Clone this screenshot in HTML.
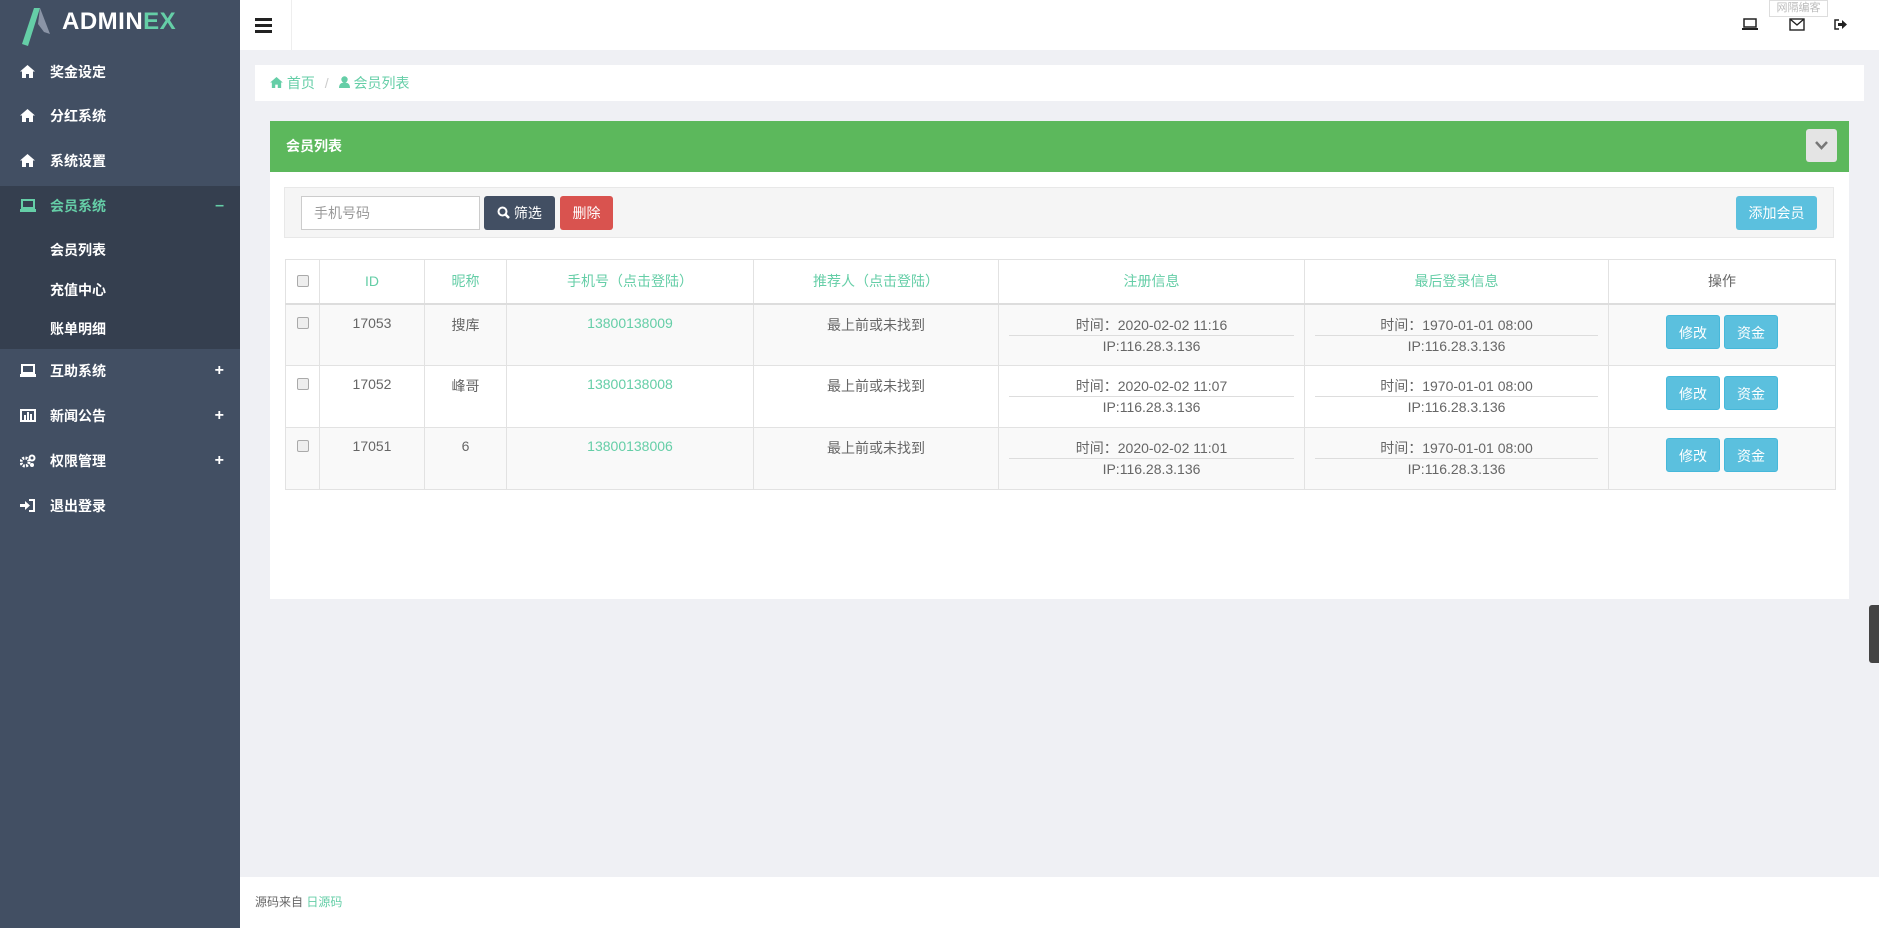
<!DOCTYPE html>
<html><head><meta charset="utf-8"><style>
*{box-sizing:border-box;margin:0;padding:0}
body{width:1879px;height:928px;position:relative;overflow:hidden;background:#eff0f4;font-family:"Liberation Sans","Noto Sans CJK SC",sans-serif;font-size:14px;color:#666}
.abs{position:absolute}
#side{left:0;top:0;width:240px;height:928px;background:#424f63}
.mi{position:absolute;left:0;width:240px;height:40px;line-height:40px;color:#fff;font-size:14px;padding-left:50px;font-weight:bold}
.mi svg{position:absolute;left:20px;top:13px}
.mi .pm{position:absolute;right:16px;top:0;font-size:16px}
.sub{position:absolute;left:50px;color:#fff;font-size:14px;font-weight:bold}
th,td{border:1px solid #e2e2e2;text-align:center;font-weight:normal}
table{border-collapse:collapse;position:absolute;left:285px;top:259px;width:1550px;table-layout:fixed;background:#fff}
th{height:44px;color:#65cea7;font-size:14px;border-bottom:2px solid #ddd}
td{height:62px;vertical-align:top;padding-top:10px;color:#666;font-size:14px}
tr.odd td{background:#f9f9f9}
.cb{display:inline-block;width:12px;height:12px;border:1px solid #aaa;border-radius:2px;background:#eee;margin-top:2px}
.inf{margin:0 10px;line-height:20px}
.inf div:first-child{border-bottom:1px solid #ddd}
.btn{position:absolute;color:#fff;font-size:14px;text-align:center;border-radius:3px}
.bi{display:inline-block;width:54px;height:34px;line-height:34px;background:#5bc0de;color:#fff;border-radius:3px;border:1px solid #46b8da;margin:0 2px}
</style></head><body>
<div id="side" class="abs">
 <svg class="abs" style="left:20px;top:4px" width="34" height="42" viewBox="0 0 34 42"><path d="M2 40 L14 4 L20 4 L8 42 Z" fill="#65cea7"/><path d="M20 4 L30 30 L24 28 L18 20 Z" fill="#8a94a6"/></svg>
 <div class="abs" style="left:62px;top:8px;font-size:24px;font-weight:bold;color:#fff;letter-spacing:0.5px">ADMIN<span style="color:#65cea7">EX</span></div>
 <div class="mi" style="top:52px"><svg width="15" height="13" viewBox="0 0 15 13"><path d="M7.5 0 L15 6.5 L13 6.5 L13 13 L9 13 L9 9 L6 9 L6 13 L2 13 L2 6.5 L0 6.5 Z" fill="#fff"/></svg>奖金设定</div>
 <div class="mi" style="top:96px"><svg width="15" height="13" viewBox="0 0 15 13"><path d="M7.5 0 L15 6.5 L13 6.5 L13 13 L9 13 L9 9 L6 9 L6 13 L2 13 L2 6.5 L0 6.5 Z" fill="#fff"/></svg>分红系统</div>
 <div class="mi" style="top:141px"><svg width="15" height="13" viewBox="0 0 15 13"><path d="M7.5 0 L15 6.5 L13 6.5 L13 13 L9 13 L9 9 L6 9 L6 13 L2 13 L2 6.5 L0 6.5 Z" fill="#fff"/></svg>系统设置</div>
 <div class="abs" style="left:0;top:186px;width:240px;height:163px;background:#353f4f"></div>
 <div class="mi" style="top:186px;color:#65cea7"><svg width="16" height="13"><rect x="2" y="1" width="12" height="8" fill="none" stroke="#65cea7" stroke-width="2"/><rect x="0" y="10" width="16" height="3" fill="#65cea7"/></svg>会员系统<span class="pm">&#8211;</span></div>
 <div class="sub" style="top:240px">会员列表</div>
 <div class="sub" style="top:280px">充值中心</div>
 <div class="sub" style="top:319px">账单明细</div>
 <div class="mi" style="top:351px"><svg width="16" height="13"><rect x="2" y="1" width="12" height="8" fill="none" stroke="#fff" stroke-width="2"/><rect x="0" y="10" width="16" height="3" fill="#fff"/></svg>互助系统<span class="pm">+</span></div>
 <div class="mi" style="top:396px"><svg width="16" height="13"><rect x="1" y="1" width="14" height="11" fill="none" stroke="#fff" stroke-width="2"/><rect x="4" y="6" width="2" height="5" fill="#fff"/><rect x="7" y="3" width="2" height="8" fill="#fff"/><rect x="10" y="5" width="2" height="6" fill="#fff"/></svg>新闻公告<span class="pm">+</span></div>
 <div class="mi" style="top:441px"><svg width="16" height="14"><circle cx="5" cy="8" r="4" fill="none" stroke="#fff" stroke-width="3" stroke-dasharray="2 1.2"/><circle cx="12" cy="4" r="2.5" fill="none" stroke="#fff" stroke-width="2"/><circle cx="12" cy="11" r="2" fill="#fff"/></svg>权限管理<span class="pm">+</span></div>
 <div class="mi" style="top:486px"><svg width="15" height="13"><path d="M9 1 H14 V12 H9" fill="none" stroke="#fff" stroke-width="2"/><path d="M0 5 H5 V2 L10 6.5 L5 11 V8 H0 Z" fill="#fff"/></svg>退出登录</div>
</div>
<div class="abs" style="left:240px;top:0;width:1639px;height:50px;background:#fff"></div>
<div class="abs" style="left:291px;top:0;width:1px;height:50px;background:#eee"></div>
<div class="abs" style="left:255px;top:18px;width:17px;height:3px;background:#222;box-shadow:0 6px 0 #222,0 12px 0 #222"></div>
<div class="abs" style="left:1769px;top:0;width:59px;height:17px;background:#fff;border:1px solid #ddd;font-size:11px;color:#bbb;text-align:center;line-height:14px">网隔编客</div>
<svg class="abs" style="left:1742px;top:18px" width="16" height="13"><rect x="2" y="1" width="12" height="8" fill="none" stroke="#222" stroke-width="1.5"/><rect x="0" y="10" width="16" height="2" fill="#222"/></svg>
<svg class="abs" style="left:1789px;top:18px" width="16" height="13"><rect x="1" y="1" width="14" height="11" fill="none" stroke="#222" stroke-width="1.4"/><path d="M1 1 L8 7 L15 1" fill="none" stroke="#222" stroke-width="1.4"/></svg>
<svg class="abs" style="left:1834px;top:18px" width="14" height="13"><path d="M5 2 H1 V11 H5" fill="none" stroke="#222" stroke-width="1.5"/><path d="M4 5 H8 V2 L13 6.5 L8 11 V8 H4 Z" fill="#222"/></svg>
<div class="abs" style="left:255px;top:65px;width:1609px;height:36px;background:#fff;line-height:36px;padding-left:15px;color:#65cea7;font-size:14px"><svg width="13" height="11" viewBox="0 0 15 13"><path d="M7.5 0 L15 6.5 L13 6.5 L13 13 L9 13 L9 9 L6 9 L6 13 L2 13 L2 6.5 L0 6.5 Z" fill="#65cea7"/></svg> 首页 <span style="color:#ccc;margin:0 6px">/</span> <svg width="11" height="12"><circle cx="5.5" cy="3.5" r="3.2" fill="#65cea7"/><path d="M0 12 Q0 6.5 5.5 6.5 Q11 6.5 11 12 Z" fill="#65cea7"/></svg> 会员列表</div>
<div class="abs" style="left:270px;top:121px;width:1579px;height:478px;background:#fff"></div>
<div class="abs" style="left:270px;top:121px;width:1579px;height:51px;background:#5cb85c;color:#fff;font-weight:bold;font-size:14px;line-height:51px;padding-left:16px">会员列表</div>
<div class="abs" style="left:1806px;top:129px;width:31px;height:33px;background:#e4e4e4;border-radius:3px"><svg style="position:absolute;left:9px;top:12px" width="13" height="9"><path d="M1 1 L6.5 7 L12 1" fill="none" stroke="#777" stroke-width="2.5"/></svg></div>
<div class="abs" style="left:284px;top:187px;width:1550px;height:51px;background:#f5f5f5;border:1px solid #e8e8e8"></div>
<div class="abs" style="left:301px;top:196px;width:179px;height:34px;background:#fff;border:1px solid #ccc;line-height:32px;padding-left:12px;color:#999">手机号码</div>
<div class="btn" style="left:484px;top:196px;width:71px;height:34px;line-height:34px;background:#424f63"><svg width="13" height="13" style="vertical-align:-1px"><circle cx="5.5" cy="5.5" r="4" fill="none" stroke="#fff" stroke-width="2"/><path d="M8.5 8.5 L12 12" stroke="#fff" stroke-width="2.5"/></svg> 筛选</div>
<div class="btn" style="left:560px;top:196px;width:53px;height:34px;line-height:34px;background:#d9534f">删除</div>
<div class="btn" style="left:1736px;top:196px;width:81px;height:34px;line-height:34px;background:#5bc0de">添加会员</div>
<table>
<colgroup><col style="width:34px"><col style="width:105px"><col style="width:82px"><col style="width:247px"><col style="width:245px"><col style="width:306px"><col style="width:304px"><col style="width:227px"></colgroup>
<tr><th><span class="cb"></span></th><th>ID</th><th>昵称</th><th>手机号（点击登陆）</th><th>推荐人（点击登陆）</th><th>注册信息</th><th>最后登录信息</th><th style="color:#666">操作</th></tr>
<tr class="odd"><td><span class="cb"></span></td><td>17053</td><td>搜库</td><td style="color:#65cea7">13800138009</td><td>最上前或未找到</td><td><div class="inf"><div>时间：2020-02-02 11:16</div><div>IP:116.28.3.136</div></div></td><td><div class="inf"><div>时间：1970-01-01 08:00</div><div>IP:116.28.3.136</div></div></td><td><span class="bi">修改</span><span class="bi">资金</span></td></tr>
<tr><td><span class="cb"></span></td><td>17052</td><td>峰哥</td><td style="color:#65cea7">13800138008</td><td>最上前或未找到</td><td><div class="inf"><div>时间：2020-02-02 11:07</div><div>IP:116.28.3.136</div></div></td><td><div class="inf"><div>时间：1970-01-01 08:00</div><div>IP:116.28.3.136</div></div></td><td><span class="bi">修改</span><span class="bi">资金</span></td></tr>
<tr class="odd"><td><span class="cb"></span></td><td>17051</td><td>6</td><td style="color:#65cea7">13800138006</td><td>最上前或未找到</td><td><div class="inf"><div>时间：2020-02-02 11:01</div><div>IP:116.28.3.136</div></div></td><td><div class="inf"><div>时间：1970-01-01 08:00</div><div>IP:116.28.3.136</div></div></td><td><span class="bi">修改</span><span class="bi">资金</span></td></tr>
</table>
<div class="abs" style="left:1869px;top:605px;width:10px;height:58px;background:#444;border-radius:3px 0 0 3px"></div>
<div class="abs" style="left:240px;top:877px;width:1639px;height:51px;background:#fff;line-height:51px;padding-left:15px;font-size:12px;color:#666">源码来自 <span style="color:#65cea7">日源码</span></div>
</body></html>
